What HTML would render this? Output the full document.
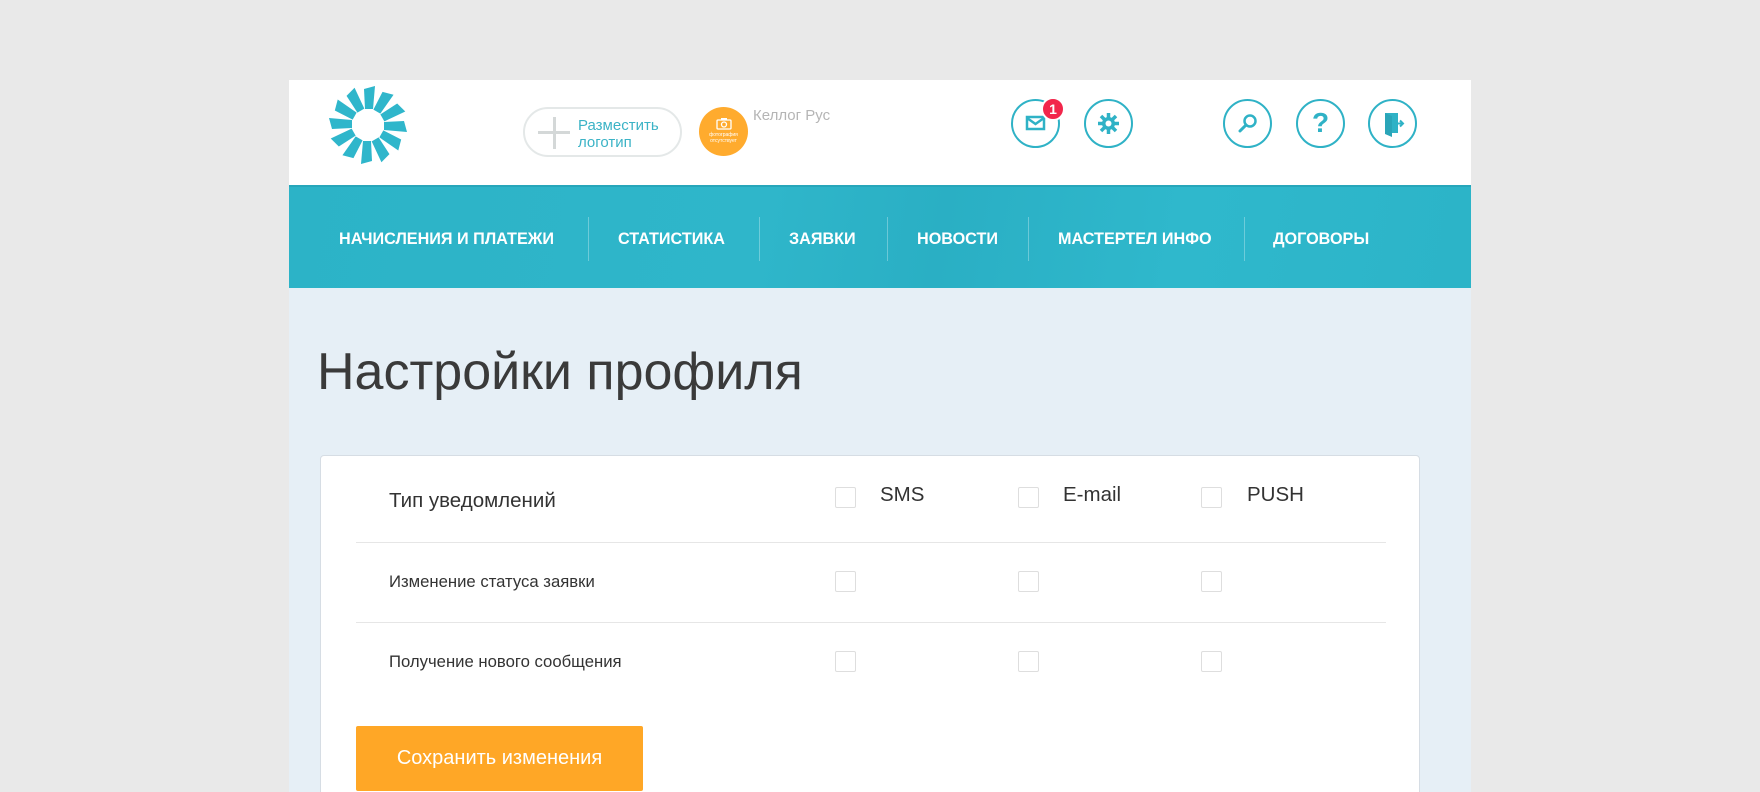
<!DOCTYPE html>
<html><head><meta charset="utf-8"><style>
*{margin:0;padding:0;box-sizing:border-box}
body{width:1760px;height:792px;background:#e9e9e9;font-family:"Liberation Sans",sans-serif;overflow:hidden;position:relative}
.wrap{position:absolute;left:289px;top:80px;width:1182px;height:712px;background:#e6eff6;overflow:hidden}
.hdr{position:absolute;left:0;top:0;width:1182px;height:105px;background:#fff}
.nav{position:absolute;left:0;top:105px;width:1182px;height:103px;background:linear-gradient(100deg,#2cb3c7 0%,#2fb6ca 40%,#2aafc4 55%,#2fb8cc 75%,#2cb4c8 100%);border-top:2px solid #27a6ba}
.nav span{position:absolute;top:43px;color:#fff;font-weight:bold;font-size:16.2px;white-space:nowrap}
.nav i{position:absolute;top:30px;width:1px;height:44px;background:rgba(255,255,255,.3)}
.ic{position:absolute;top:19px;width:49px;height:49px;border:2px solid #2fb2c6;border-radius:50%}
.ic svg{position:absolute;left:0;top:0}
h1{position:absolute;left:28px;top:262px;font-size:52px;font-weight:normal;color:#3a3a3a;letter-spacing:0}
.card{position:absolute;left:31px;top:375px;width:1100px;height:360px;background:#fff;border:1px solid #d6dde4;border-radius:4px}
.cb{position:absolute;width:21px;height:21px;border:1px solid #dedede;border-radius:2px;background:#fff}
.lbl{position:absolute;color:#333;white-space:nowrap}
.hr{position:absolute;left:35px;width:1030px;height:1px;background:#e6e6e6}
.btn{position:absolute;left:35px;top:270px;width:287px;height:65px;background:#ffa726;color:#fff;font-size:20px;text-align:center;line-height:65px;border-radius:2px}
</style></head><body>
<div class="wrap">
<div class="hdr">
<svg style="position:absolute;left:39px;top:5px" width="80" height="80" viewBox="-40 -40 80 80">
<g fill="#2fb6cb">
<g id="p"><polygon points="-3,-16 5,-16 7,-39 -4,-36"/></g>
<use href="#p" transform="rotate(30)"/><use href="#p" transform="rotate(60)"/><use href="#p" transform="rotate(90)"/>
<use href="#p" transform="rotate(120)"/><use href="#p" transform="rotate(150)"/><use href="#p" transform="rotate(180)"/>
<use href="#p" transform="rotate(210)"/><use href="#p" transform="rotate(240)"/><use href="#p" transform="rotate(270)"/>
<use href="#p" transform="rotate(300)"/><use href="#p" transform="rotate(330)"/>
</g></svg>
<div style="position:absolute;left:234px;top:27px;width:159px;height:50px;border:2px solid #e4e8e8;border-radius:25px">
<div style="position:absolute;left:13px;top:22px;width:32px;height:3px;background:#d4d8d8"></div>
<div style="position:absolute;left:28px;top:8px;width:3px;height:32px;background:#d4d8d8"></div>
<div style="position:absolute;left:53px;top:8px;font-size:15px;color:#3bb3c6;line-height:17px">Разместить<br>логотип</div>
</div>
<div style="position:absolute;left:410px;top:27px;width:49px;height:49px;border-radius:50%;background:#ffab2e;color:#fff;font-size:5px;text-align:center">
<svg width="16" height="13" style="margin-top:10px" viewBox="0 0 16 13"><rect x="1" y="3" width="14" height="9" rx="1" fill="none" stroke="#fff" stroke-width="1.3"/><circle cx="8" cy="7.5" r="2.5" fill="none" stroke="#fff" stroke-width="1.3"/><rect x="5" y="1" width="6" height="2" fill="#fff"/></svg><div>фотография<br>отсутствует</div></div>
<div style="position:absolute;left:464px;top:27px;font-size:15px;color:#b5b5b5">Келлог Рус</div>
<div class="ic" style="left:722px"><svg width="45" height="45"><rect x="14" y="16" width="17" height="12" fill="none" stroke="#2fb2c6" stroke-width="2.5"/><path d="M14 17 L22.5 23 L31 17" fill="none" stroke="#2fb2c6" stroke-width="2.5"/></svg></div>
<div style="position:absolute;left:752px;top:17px;width:24px;height:24px;border-radius:50%;background:#f2264b;border:2px solid #fff;color:#fff;font-weight:bold;font-size:14px;text-align:center;line-height:20px">1</div>
<div class="ic" style="left:795px"><svg width="45" height="45"><g stroke="#2fb2c6" stroke-width="3.5"><line x1="22.5" y1="12" x2="22.5" y2="33"/><line x1="12" y1="22.5" x2="33" y2="22.5"/><line x1="15" y1="15" x2="30" y2="30"/><line x1="30" y1="15" x2="15" y2="30"/></g><circle cx="22.5" cy="22.5" r="6.5" fill="#2fb2c6"/><circle cx="22.5" cy="22.5" r="3" fill="#fff"/></svg></div>
<div class="ic" style="left:934px"><svg width="45" height="45"><circle cx="25" cy="20" r="5.5" fill="none" stroke="#2fb2c6" stroke-width="2.5"/><line x1="21" y1="24" x2="15" y2="30" stroke="#2fb2c6" stroke-width="3" stroke-linecap="round"/></svg></div>
<div class="ic" style="left:1007px"><div style="text-align:center;font-weight:bold;font-size:28px;color:#2fb2c6;line-height:44px">?</div></div>
<div class="ic" style="left:1079px"><svg width="45" height="45"><path d="M15 12 H28 V32 H15 Z" fill="#2fb2c6"/><path d="M15 12 L22 15 V36 L15 33Z" fill="#2aa5b8"/><path d="M27 22.5 H33 M30 19.5 L33 22.5 L30 25.5" stroke="#2fb2c6" stroke-width="2" fill="none"/></svg></div>
</div>
<div class="nav">
<span style="left:50px">НАЧИСЛЕНИЯ И ПЛАТЕЖИ</span><i style="left:299px"></i>
<span style="left:329px">СТАТИСТИКА</span><i style="left:470px"></i>
<span style="left:500px">ЗАЯВКИ</span><i style="left:598px"></i>
<span style="left:628px">НОВОСТИ</span><i style="left:739px"></i>
<span style="left:769px">МАСТЕРТЕЛ ИНФО</span><i style="left:955px"></i>
<span style="left:984px">ДОГОВОРЫ</span>
</div>
<h1>Настройки профиля</h1>
<div class="card">
<div class="lbl" style="left:68px;top:33px;font-size:20.5px">Тип уведомлений</div>
<div class="cb" style="left:514px;top:31px"></div><div class="lbl" style="left:559px;top:27px;font-size:20.5px">SMS</div>
<div class="cb" style="left:697px;top:31px"></div><div class="lbl" style="left:742px;top:27px;font-size:20.5px">E-mail</div>
<div class="cb" style="left:880px;top:31px"></div><div class="lbl" style="left:926px;top:27px;font-size:20.5px">PUSH</div>
<div class="hr" style="top:86px"></div>
<div class="lbl" style="left:68px;top:116px;font-size:16.7px">Изменение статуса заявки</div>
<div class="cb" style="left:514px;top:115px"></div><div class="cb" style="left:697px;top:115px"></div><div class="cb" style="left:880px;top:115px"></div>
<div class="hr" style="top:166px"></div>
<div class="lbl" style="left:68px;top:196px;font-size:16.7px">Получение нового сообщения</div>
<div class="cb" style="left:514px;top:195px"></div><div class="cb" style="left:697px;top:195px"></div><div class="cb" style="left:880px;top:195px"></div>
<div class="btn">Сохранить изменения</div>
</div>
</div>
</body></html>
